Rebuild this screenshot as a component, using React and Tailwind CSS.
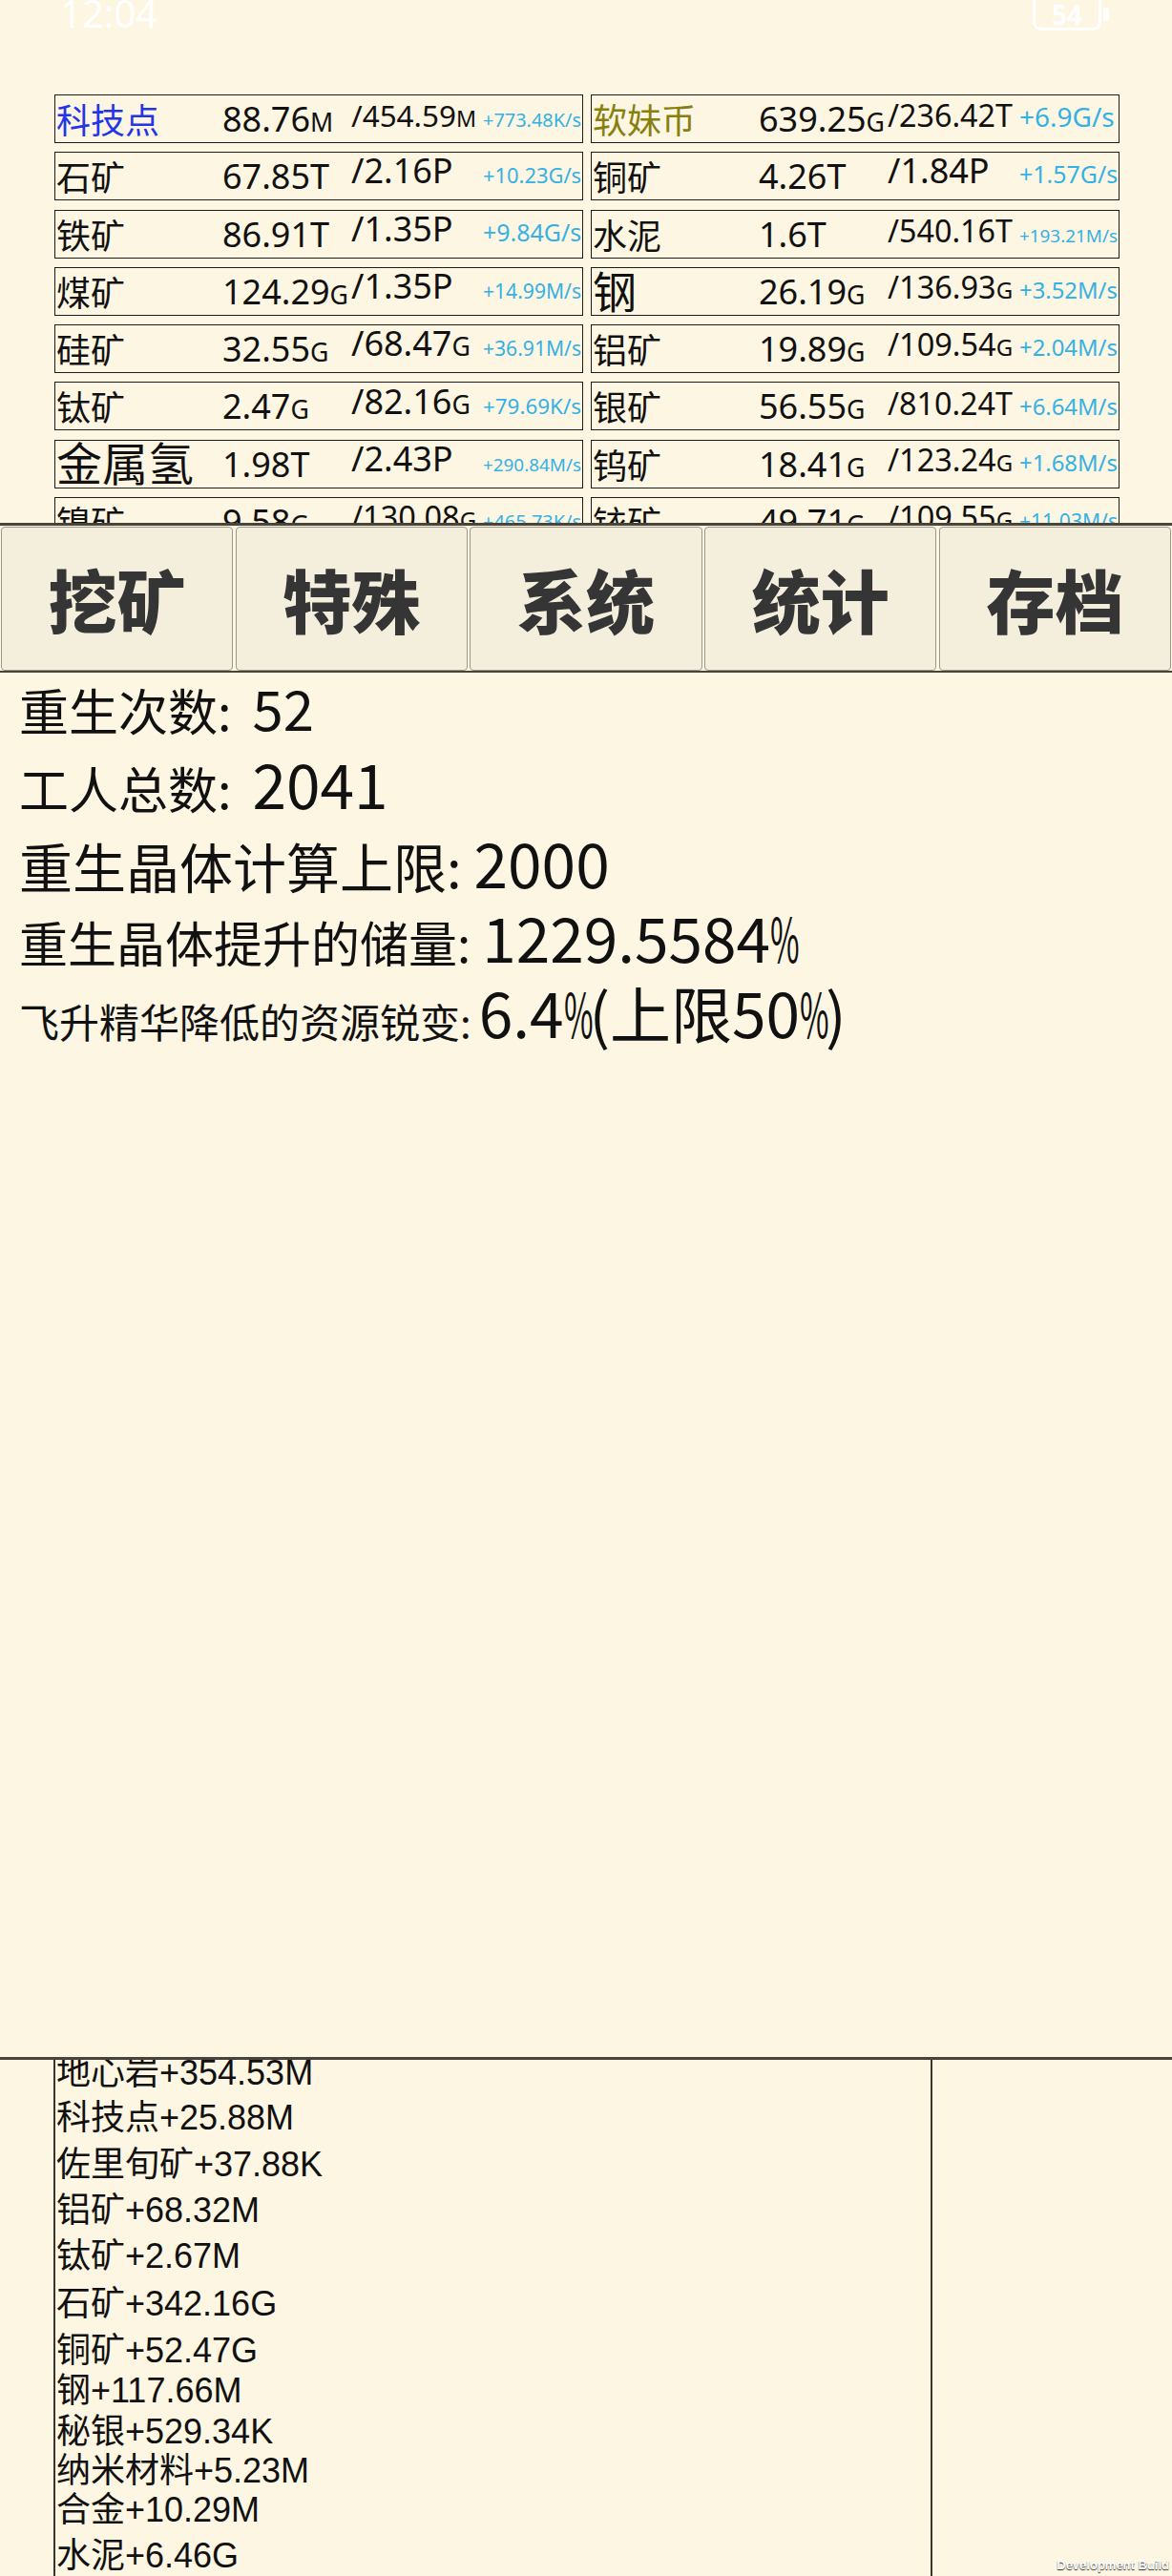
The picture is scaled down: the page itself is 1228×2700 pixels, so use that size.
import React from 'react'

const LEFT = [
  { name: '科技点', nameCls: 'pt-[9px] text-[36px] text-[#2434e8]', value: ['88.76', 'M'], max: ['454.59', 'M'], rate: '+773.48K/s' },
  { name: '石矿', value: ['67.85', 'T'], max: ['2.16', 'P'], rate: '+10.23G/s' },
  { name: '铁矿', value: ['86.91', 'T'], max: ['1.35', 'P'], rate: '+9.84G/s' },
  { name: '煤矿', value: ['124.29', 'G'], max: ['1.35', 'P'], rate: '+14.99M/s' },
  { name: '硅矿', value: ['32.55', 'G'], max: ['68.47', 'G'], rate: '+36.91M/s' },
  { name: '钛矿', value: ['2.47', 'G'], max: ['82.16', 'G'], rate: '+79.69K/s' },
  { name: '金属氢', nameCls: 'pt-0 text-[48px]', value: ['1.98', 'T'], max: ['2.43', 'P'], rate: '+290.84M/s' },
  { name: '镍矿', value: ['9.58', 'G'], max: ['130.08', 'G'], rate: '+465.73K/s' },
]

const RIGHT = [
  { name: '软妹币', nameCls: 'pt-[9px] text-[36px] text-[#87800f]', value: ['639.25', 'G'], max: ['236.42', 'T'], rate: '+6.9G/s' },
  { name: '铜矿', value: ['4.26', 'T'], max: ['1.84', 'P'], rate: '+1.57G/s' },
  { name: '水泥', value: ['1.6', 'T'], max: ['540.16', 'T'], rate: '+193.21M/s' },
  { name: '钢', nameCls: 'pt-[1px] text-[46px]', value: ['26.19', 'G'], max: ['136.93', 'G'], rate: '+3.52M/s' },
  { name: '铝矿', value: ['19.89', 'G'], max: ['109.54', 'G'], rate: '+2.04M/s' },
  { name: '银矿', value: ['56.55', 'G'], max: ['810.24', 'T'], rate: '+6.64M/s' },
  { name: '钨矿', value: ['18.41', 'G'], max: ['123.24', 'G'], rate: '+1.68M/s' },
  { name: '铱矿', value: ['49.71', 'G'], max: ['109.55', 'G'], rate: '+11.03M/s' },
]

const TABS = ['挖矿', '特殊', '系统', '统计', '存档']

const STATS = [
  { label: '重生次数:', value: ['52'], labelCls: 'text-[52px]', valueCls: 'text-[58px] ml-[22px]', mt: 'mt-[7px]' },
  { label: '工人总数:', value: ['2041'], labelCls: 'text-[52px]', valueCls: 'text-[64px] ml-[22px]', mt: 'mt-[18px]' },
  { label: '重生晶体计算上限:', value: ['2000'], labelCls: 'text-[56px]', valueCls: 'text-[64px] ml-[13px]', mt: 'mt-[19px]' },
  { label: '重生晶体提升的储量:', value: ['1229.5584', '%'], labelCls: 'text-[51px]', valueCls: 'text-[64px] ml-[12px]', mt: 'mt-[14px]' },
  { label: '飞升精华降低的资源锐变:', value: ['6.4', '%', '(上限50', '%', ')'], labelCls: 'text-[42px]', valueCls: 'text-[64px] ml-[8px]', mt: 'mt-[15px]' },
]

const LOG = [
  ['地心岩+354.53M', '-mt-[4px]'],
  ['科技点+25.88M', 'mt-[11px]'],
  ['佐里旬矿+37.88K', 'mt-[13px]'],
  ['铝矿+68.32M', 'mt-[12px]'],
  ['钛矿+2.67M', 'mt-[12px]'],
  ['石矿+342.16G', 'mt-[14px]'],
  ['铜矿+52.47G', 'mt-[13px]'],
  ['钢+117.66M', 'mt-[6px]'],
  ['秘银+529.34K', 'mt-[7px]'],
  ['纳米材料+5.23M', 'mt-[5px]'],
  ['合金+10.29M', 'mt-[5px]'],
  ['水泥+6.46G', 'mt-[12px]'],
]

// rough Noto Sans advance widths, used for the best-fit columns
const EM = { '+': 0.572, '.': 0.268, '/': 0.372, s: 0.479, K: 0.618, G: 0.72, M: 0.907, T: 0.556, P: 0.618 }
const SMALL = 0.74

function textEm(text, unitScale = 1) {
  return [...text].reduce((sum, ch) => {
    const w = EM[ch] ?? 0.572
    return sum + (ch === 'G' || ch === 'M' ? w * unitScale : w)
  }, 0)
}

function fitSize(text, width, max, unitScale) {
  return Math.min(max, width / textEm(text, unitScale))
}

function Amount({ n, u }) {
  const small = u === 'G' || u === 'M'
  return (
    <>
      {n}
      <span className={small ? 'text-[0.74em]' : ''}>{u}</span>
    </>
  )
}

function ResourceCell({ r }) {
  const maxSize = fitSize(`/${r.max[0]}${r.max[1]}`, 131, 36, SMALL)
  return (
    <div className="flex h-[51px] overflow-hidden border-[1.5px] border-[#1c1c1c] pl-[1px] text-[#111]">
      <div className={`w-[174px] shrink-0 whitespace-nowrap leading-none ${r.nameCls || 'pt-[9px] text-[36px]'}`}>
        {r.name}
      </div>
      <div className="w-[135px] shrink-0 whitespace-nowrap pt-[7px] text-[36px] leading-none">
        <Amount n={r.value[0]} u={r.value[1]} />
      </div>
      <div
        className="flex min-w-0 flex-1 items-baseline"
        style={{ paddingTop: `${Math.max(0, 33 - 0.888 * maxSize)}px` }}
      >
        <div className="w-[138px] shrink-0 whitespace-nowrap leading-none" style={{ fontSize: `${maxSize}px` }}>
          /<Amount n={r.max[0]} u={r.max[1]} />
        </div>
        <div
          className="whitespace-nowrap leading-none text-[#35b1e3]"
          style={{ fontSize: `${fitSize(r.rate, 103, 28, 1)}px` }}
        >
          {r.rate}
        </div>
      </div>
    </div>
  )
}

// the game's percent sign is a tall, narrow glyph
function Pct() {
  return <span className="inline-block w-[0.42em] origin-left scale-x-[0.52]">%</span>
}

export default function App() {
  const rows = LEFT.flatMap((r, i) => [r, RIGHT[i]])

  return (
    <div className="relative h-[2700px] w-[1228px] overflow-hidden bg-[#fdf6e3] font-['Noto_Sans','Noto_Sans_CJK_SC',sans-serif]">
      {/* resource table, clipped by the tab bar */}
      <div className="h-[548px] overflow-hidden">
        <div className="flex h-[40px] items-start justify-between pl-[63px] pr-[66px]">
          <span className="-mt-[6px] text-[40px] leading-none text-white">12:04</span>
          <div className="-mt-[6px] flex items-center">
            <div className="flex h-[38px] w-[72px] items-center justify-center rounded-[9px] border-[3px] border-white pt-[4px] text-[28px] font-bold leading-none text-white">
              54
            </div>
            <div className="ml-[2px] mt-[4px] h-[14px] w-[6px] rounded-r-[3px] bg-white" />
          </div>
        </div>

        <div className="mt-[59px] grid grid-cols-2 gap-x-[8px] gap-y-[9.3px] pl-[57px] pr-[55px]">
          {rows.map((r, i) => (
            <ResourceCell key={i} r={r} />
          ))}
        </div>
      </div>

      {/* tab bar */}
      <div className="flex gap-[2.5px] border-t-[3px] border-b-2 border-[#48433b] px-[1px] pt-[1px]">
        {TABS.map((t) => (
          <button
            key={t}
            type="button"
            className="flex h-[151px] flex-1 items-center justify-center rounded-[4px] border border-[#9d978a] bg-[#f4eedc] pb-[2px] font-['Noto_Sans_CJK_SC',sans-serif] text-[72px] font-black text-[#353535]"
          >
            {t}
          </button>
        ))}
      </div>

      {/* stats */}
      <div className="flex h-[1451px] flex-col pl-[20px] font-['Noto_Sans_CJK_SC',sans-serif] text-[#111]">
        {STATS.map((s) => (
          <div key={s.label} className={`flex items-baseline whitespace-nowrap leading-none ${s.mt}`}>
            <span className={s.labelCls}>{s.label}</span>
            <span className={s.valueCls}>
              {s.value.map((part, i) => (part === '%' ? <Pct key={i} /> : <span key={i}>{part}</span>))}
            </span>
          </div>
        ))}
      </div>

      {/* log */}
      <div className="h-[3px] bg-[#48433b]" />
      <div className="h-[541px] overflow-hidden">
        <div className="ml-[56px] h-full w-[921px] overflow-hidden border-x-2 border-[#3a352e] pl-[1px] font-['Liberation_Sans','Noto_Sans_CJK_SC',sans-serif] text-[36px] text-[#111]">
          {LOG.map(([t, mt]) => (
            <div key={t} className={`whitespace-nowrap leading-none ${mt}`}>
              {t}
            </div>
          ))}
        </div>
      </div>

      <div className="absolute bottom-[5px] right-[3px] font-['Liberation_Sans',sans-serif] text-[13px] font-bold leading-none text-white [text-shadow:0_1px_1px_rgba(0,0,0,0.85)]">
        Development Build
      </div>
    </div>
  )
}
